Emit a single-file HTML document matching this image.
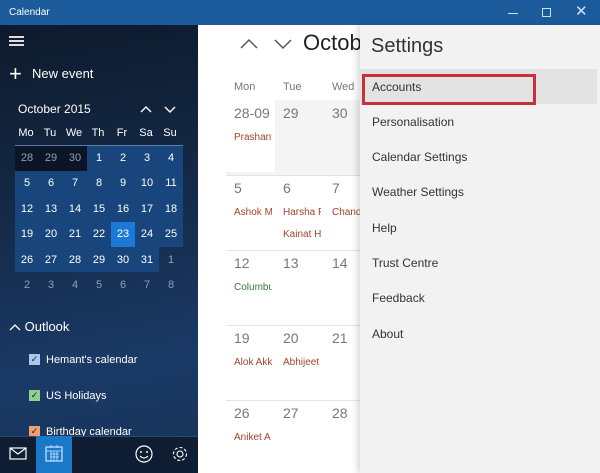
<!DOCTYPE html>
<html><head><meta charset="utf-8"><style>
*{margin:0;padding:0;box-sizing:border-box}
body{width:600px;height:473px;overflow:hidden;font-family:"Liberation Sans",sans-serif;position:relative;background:#fff}
.a{position:absolute}
.tb{left:0;top:0;width:600px;height:25px;background:#1b5b9c;color:#fff;font-size:10px}
.side{left:0;top:25px;width:198px;height:448px;background:linear-gradient(170deg,#0e1a2c 0%,#142a48 40%,#1a3a66 75%,#163256 100%)}
.w{color:#fff}
.mc{position:absolute;width:24px;text-align:center;font-size:11px;color:#fff}
.dim{color:#8aa0bc}
.main{left:198px;top:25px;width:162px;height:448px;background:#fff}
.dn{font-size:14px;color:#777}
.ev{font-size:10px;color:#a0442a}
.set{left:360px;top:25px;width:240px;height:448px;background:#f2f2f2;box-shadow:-3px 0 6px rgba(0,0,0,.15)}
.si{position:absolute;left:12px;font-size:12px;color:#333}
</style></head><body>
<div class="a tb"><span class="a" style="left:9px;top:7px">Calendar</span>
<span class="a" style="left:508px;top:13px;width:10px;height:1px;background:#cfe0f0"></span>
<span class="a" style="left:542px;top:8px;width:9px;height:9px;border:1px solid #cfe0f0"></span>
<span class="a" style="left:575px;top:2px;font-size:15px;color:#cfe0f0">✕</span></div>
<div class="a side">
<div class="a" style="left:9px;top:11px;width:15px;height:2px;background:#ddd;box-shadow:0 4px 0 #ddd,0 8px 0 #ddd"></div>
<div class="a w" style="left:9px;top:36px;font-size:22px;font-weight:300">+</div>
<div class="a w" style="left:32px;top:41px;font-size:13px">New event</div>
<div class="a w" style="left:18px;top:77px;font-size:12px">October 2015</div>
<svg class="a" style="left:138px;top:78px" width="46" height="12"><path d="M3 9l5-5 5 5M27 4l5 5 5-5" stroke="#fff" fill="none" stroke-width="1.4"/></svg>
<div class="a" style="left:15px;top:120px;width:168px;height:1px;background:#5a7ca8"></div>
<div class="a" style="left:15px;top:121px;width:72px;height:25px;background:#0b1526"></div>
<div class="a" style="left:87px;top:121px;width:96px;height:25px;background:#17457c"></div>
<div class="a" style="left:15px;top:146px;width:168px;height:76px;background:#17457c"></div>
<div class="a" style="left:15px;top:222px;width:144px;height:25px;background:#17457c"></div>
<div class="a" style="left:111px;top:197px;width:24px;height:25px;background:#1a7ad6"></div>
<div id="mini"></div>
<div class="a w" style="left:9px;top:294px;font-size:13px"><svg width="12" height="8"><path d="M1 7l5-5 5 5" stroke="#fff" fill="none" stroke-width="1.3"/></svg> Outlook</div>
<div class="a" style="left:29px;top:329px;width:11px;height:11px;background:#a8c8f0;color:#123;font-size:9px;text-align:center;line-height:11px">✓</div>
<div class="a w" style="left:46px;top:329px;font-size:11px">Hemant's calendar</div>
<div class="a" style="left:29px;top:365px;width:11px;height:11px;background:#8ed08e;color:#123;font-size:9px;text-align:center;line-height:11px">✓</div>
<div class="a w" style="left:46px;top:365px;font-size:11px">US Holidays</div>
<div class="a" style="left:29px;top:401px;width:11px;height:11px;background:#f0a070;color:#123;font-size:9px;text-align:center;line-height:11px">✓</div>
<div class="a w" style="left:46px;top:401px;font-size:11px">Birthday calendar</div>
<div class="a" style="left:0;top:411px;width:198px;height:37px;background:#0f1d33;border-top:1px solid #2c4a70"></div>
<div class="a" style="left:36px;top:411px;width:36px;height:37px;background:#1a78c8"></div>
<svg class="a" style="left:9px;top:422px" width="20" height="14"><rect x="1" y="1" width="16" height="11" fill="none" stroke="#fff" stroke-width="1.2"/><path d="M1 1l8 6 8-6" stroke="#fff" fill="none" stroke-width="1.2"/></svg>
<svg class="a" style="left:45px;top:420px" width="18" height="18"><rect x="1" y="2" width="16" height="14" fill="none" stroke="#cfe6ff" stroke-width="1.2"/><path d="M1 6h16M5 9h9M5 12h9M6 6v10M9 6v10M12 6v10M6 0v3M12 0v3" stroke="#cfe6ff" stroke-width=".8"/></svg>
<svg class="a" style="left:134px;top:419px" width="20" height="20"><circle cx="10" cy="10" r="8" fill="none" stroke="#fff" stroke-width="1.2"/><circle cx="7" cy="8" r="1" fill="#fff"/><circle cx="13" cy="8" r="1" fill="#fff"/><path d="M6 12q4 4 8 0" stroke="#fff" fill="none" stroke-width="1.1"/></svg>
<svg class="a" style="left:170px;top:419px" width="20" height="20"><circle cx="10" cy="10" r="3" fill="none" stroke="#fff" stroke-width="1.1"/><circle cx="10" cy="10" r="6.5" fill="none" stroke="#fff" stroke-width="1.1" stroke-dasharray="3 2"/></svg>
</div>
<div class="a main">
<svg class="a" style="left:40px;top:12px" width="56" height="14"><path d="M3 11l8-8 8 8M37 3l8 8 8-8" stroke="#555" fill="none" stroke-width="1.5"/></svg>
<div class="a" style="left:105px;top:5px;font-size:22px;color:#222">Octob</div>
<div class="a" style="left:36px;top:56px;font-size:11px;color:#777">Mon</div>
<div class="a" style="left:85px;top:56px;font-size:11px;color:#777">Tue</div>
<div class="a" style="left:134px;top:56px;font-size:11px;color:#777">Wed</div>
<div class="a" style="left:28px;top:75px;width:134px;height:75px;background:#f4f4f4"></div>
<div class="a" style="left:28px;top:75px;width:49px;height:72px;background:#fff"></div>
<div class="a" style="left:28px;top:150px;width:134px;height:1px;background:#e4e4e4"></div>
<div class="a" style="left:28px;top:225px;width:134px;height:1px;background:#e4e4e4"></div>
<div class="a" style="left:28px;top:300px;width:134px;height:1px;background:#e4e4e4"></div>
<div class="a" style="left:28px;top:375px;width:134px;height:1px;background:#e4e4e4"></div>
<div class="a dn" style="left:36px;top:80px">28-09</div><div class="a dn" style="left:85px;top:80px">29</div><div class="a dn" style="left:134px;top:80px">30</div>
<div class="a ev" style="left:36px;top:107px;width:38px;overflow:hidden;white-space:nowrap">Prashant</div>
<div class="a dn" style="left:36px;top:155px">5</div><div class="a dn" style="left:85px;top:155px">6</div><div class="a dn" style="left:134px;top:155px">7</div>
<div class="a ev" style="left:36px;top:182px;width:38px;overflow:hidden;white-space:nowrap">Ashok M</div>
<div class="a ev" style="left:85px;top:182px;width:38px;overflow:hidden;white-space:nowrap">Harsha P</div>
<div class="a ev" style="left:134px;top:182px;white-space:nowrap">Chand</div>
<div class="a ev" style="left:85px;top:204px;white-space:nowrap">Kainat H</div>
<div class="a dn" style="left:36px;top:230px">12</div><div class="a dn" style="left:85px;top:230px">13</div><div class="a dn" style="left:134px;top:230px">14</div>
<div class="a ev" style="left:36px;top:257px;color:#3a7a3a;width:38px;overflow:hidden">Columbus</div>
<div class="a dn" style="left:36px;top:305px">19</div><div class="a dn" style="left:85px;top:305px">20</div><div class="a dn" style="left:134px;top:305px">21</div>
<div class="a ev" style="left:36px;top:332px;width:38px;overflow:hidden;white-space:nowrap">Alok Akk</div>
<div class="a ev" style="left:85px;top:332px">Abhijeet</div>
<div class="a dn" style="left:36px;top:380px">26</div><div class="a dn" style="left:85px;top:380px">27</div><div class="a dn" style="left:134px;top:380px">28</div>
<div class="a ev" style="left:36px;top:407px;width:38px;overflow:hidden;white-space:nowrap">Aniket A</div>
</div>
<div class="a set">
<div class="a" style="left:11px;top:10px;font-size:20px;color:#333">Settings</div>
<div class="a" style="left:0;top:44px;width:237px;height:35px;background:#e3e3e3"></div>
<div class="a" style="left:2px;top:49px;width:174px;height:31px;border:3px solid #c8303c"></div>
<div class="si" style="top:55px">Accounts</div>
<div class="si" style="top:90px">Personalisation</div>
<div class="si" style="top:125px">Calendar Settings</div>
<div class="si" style="top:160px">Weather Settings</div>
<div class="si" style="top:196px">Help</div>
<div class="si" style="top:231px">Trust Centre</div>
<div class="si" style="top:266px">Feedback</div>
<div class="si" style="top:302px">About</div>
</div>
<script>
var h='',hd=['Mo','Tu','We','Th','Fr','Sa','Su'];
for(var i=0;i<7;i++)h+='<div class="mc" style="left:'+(14+i*24)+'px;top:102px">'+hd[i]+'</div>';
var d=[28,29,30];for(var i=1;i<=31;i++)d.push(i);for(var i=1;i<=8;i++)d.push(i);
for(var k=0;k<42;k++){var r=Math.floor(k/7),c=k%7,dim=(k<3||k>33);
h+='<div class="mc'+(dim?' dim':'')+'" style="left:'+(15+c*24)+'px;top:'+(127+r*25.4)+'px">'+d[k]+'</div>';}
document.getElementById('mini').innerHTML=h;
</script>
</body></html>
